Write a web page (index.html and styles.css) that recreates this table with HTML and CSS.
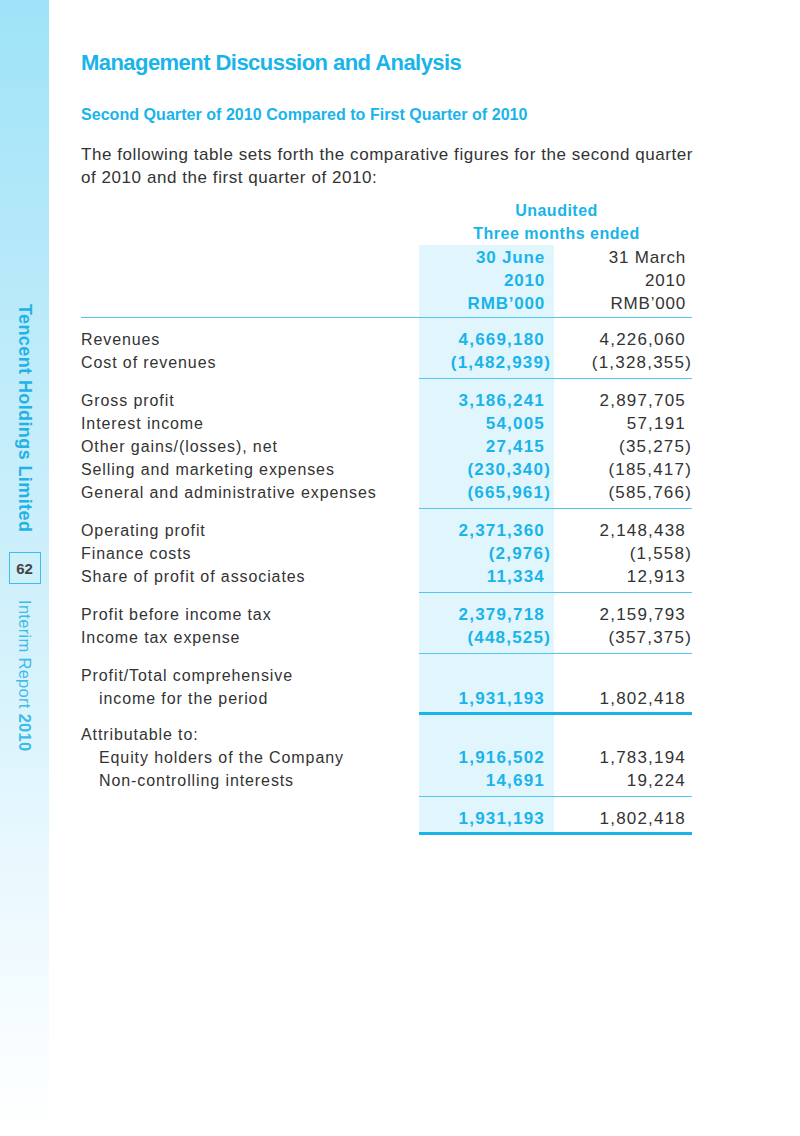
FILE: index.html
```html
<!DOCTYPE html>
<html lang="en">
<head>
<meta charset="utf-8">
<title>Management Discussion and Analysis</title>
<link rel="stylesheet" href="styles.css">
</head>
<body>
<div class="page">
  <aside class="side">
    <div class="side-company">Tencent Holdings Limited</div>
    <div class="side-page">62</div>
    <div class="side-report">Interim Report <b>2010</b></div>
  </aside>
  <main class="content">
    <h1 class="title">Management Discussion and Analysis</h1>
    <h2 class="subtitle">Second Quarter of 2010 Compared to First Quarter of 2010</h2>
    <p class="intro">The following table sets forth the comparative figures for the second quarter<br>of 2010 and the first quarter of 2010:</p>
    <table class="fin">
      <colgroup>
        <col class="c-label">
        <col class="c-cur">
        <col class="c-prev">
      </colgroup>
      <thead>
        <tr><th></th><th colspan="2" class="ghead">Unaudited</th></tr>
        <tr><th></th><th colspan="2" class="ghead">Three months ended</th></tr>
        <tr class="h-first"><th></th><th class="cur">30 June</th><th class="prev">31 March</th></tr>
        <tr><th></th><th class="cur">2010</th><th class="prev">2010</th></tr>
        <tr class="h-last"><th></th><th class="cur">RMB’000</th><th class="prev">RMB’000</th></tr>
      </thead>
      <tbody class="grp">
        <tr><td class="lbl">Revenues</td><td class="cur">4,669,180</td><td class="prev">4,226,060</td></tr>
        <tr><td class="lbl">Cost of revenues</td><td class="cur">(1,482,939<span class="rp">)</span></td><td class="prev">(1,328,355<span class="rp">)</span></td></tr>
      </tbody>
      <tbody class="grp">
        <tr><td class="lbl">Gross profit</td><td class="cur">3,186,241</td><td class="prev">2,897,705</td></tr>
        <tr><td class="lbl">Interest income</td><td class="cur">54,005</td><td class="prev">57,191</td></tr>
        <tr><td class="lbl">Other gains/(losses), net</td><td class="cur">27,415</td><td class="prev">(35,275<span class="rp">)</span></td></tr>
        <tr><td class="lbl">Selling and marketing expenses</td><td class="cur">(230,340<span class="rp">)</span></td><td class="prev">(185,417<span class="rp">)</span></td></tr>
        <tr><td class="lbl">General and administrative expenses</td><td class="cur">(665,961<span class="rp">)</span></td><td class="prev">(585,766<span class="rp">)</span></td></tr>
      </tbody>
      <tbody class="grp">
        <tr><td class="lbl">Operating profit</td><td class="cur">2,371,360</td><td class="prev">2,148,438</td></tr>
        <tr><td class="lbl">Finance costs</td><td class="cur">(2,976<span class="rp">)</span></td><td class="prev">(1,558<span class="rp">)</span></td></tr>
        <tr><td class="lbl">Share of profit of associates</td><td class="cur">11,334</td><td class="prev">12,913</td></tr>
      </tbody>
      <tbody class="grp">
        <tr><td class="lbl">Profit before income tax</td><td class="cur">2,379,718</td><td class="prev">2,159,793</td></tr>
        <tr><td class="lbl">Income tax expense</td><td class="cur">(448,525<span class="rp">)</span></td><td class="prev">(357,375<span class="rp">)</span></td></tr>
      </tbody>
      <tbody class="grp thick">
        <tr><td class="lbl">Profit/Total comprehensive</td><td class="cur"></td><td class="prev"></td></tr>
        <tr><td class="lbl indent">income for the period</td><td class="cur">1,931,193</td><td class="prev">1,802,418</td></tr>
      </tbody>
      <tbody class="grp">
        <tr><td class="lbl">Attributable to:</td><td class="cur"></td><td class="prev"></td></tr>
        <tr><td class="lbl indent">Equity holders of the Company</td><td class="cur">1,916,502</td><td class="prev">1,783,194</td></tr>
        <tr><td class="lbl indent">Non-controlling interests</td><td class="cur">14,691</td><td class="prev">19,224</td></tr>
      </tbody>
      <tbody class="grp thick">
        <tr><td class="lbl"></td><td class="cur">1,931,193</td><td class="prev">1,802,418</td></tr>
      </tbody>
    </table>
  </main>
</div>
</body>
</html>
```

FILE: styles.css
```css
* {
  box-sizing: border-box;
  margin: 0;
  padding: 0;
}

html, body {
  margin: 0;
  background: #ffffff;
}

body {
  font-family: "Liberation Sans", Arial, sans-serif;
  color: #333333;
}

.page {
  display: flex;
  min-height: 1136px;
}

/* ---------- sidebar ---------- */
.side {
  width: 49px;
  flex: none;
  background: linear-gradient(to bottom, #9fe3f8 0%, #bdebfa 30%, #d2f1fb 55%, #e8f8fe 75%, #f8fdff 92%, #ffffff 100%);
  display: flex;
  flex-direction: column;
  align-items: center;
  padding-top: 304px;
}

.side-company {
  writing-mode: vertical-rl;
  font-weight: bold;
  font-size: 18px;
  line-height: 20px;
  color: #22b2e6;
  letter-spacing: 0.4px;
}

.side-page {
  margin-top: 20px;
  width: 32px;
  height: 32px;
  border: 1px solid #3cbfea;
  display: flex;
  align-items: center;
  justify-content: center;
  font-weight: bold;
  font-size: 15px;
  color: #444444;
}

.side-report {
  writing-mode: vertical-rl;
  margin-top: 16px;
  font-size: 16.5px;
  line-height: 20px;
  letter-spacing: 0.3px;
  color: #3dbbea;
}

.side-report b {
  font-weight: bold;
}

/* ---------- content ---------- */
.content {
  padding: 50px 0 0 32px;
  width: 651px;
}

.title {
  font-size: 22px;
  line-height: 26px;
  font-weight: bold;
  color: #18b4ea;
  letter-spacing: -0.55px;
}

.subtitle {
  margin-top: 29px;
  font-size: 16px;
  line-height: 20px;
  font-weight: bold;
  color: #18b4ea;
  letter-spacing: 0.05px;
}

.intro {
  margin-top: 18px;
  font-size: 17px;
  line-height: 23px;
  letter-spacing: 0.56px;
  color: #333333;
}

/* ---------- table ---------- */
.fin {
  margin-top: 10px;
  width: 611px;
  border-collapse: collapse;
  font-size: 16px;
  line-height: 23px;
}

.c-label { width: 338px; }
.c-cur { width: 135px; }
.c-prev { width: 138px; }

.fin th, .fin td {
  padding: 0;
  font-weight: normal;
  vertical-align: middle;
  white-space: nowrap;
}

.ghead {
  text-align: center;
  font-weight: bold !important;
  color: #18b4ea;
  letter-spacing: 0.5px;
  padding-left: 2px !important;
}

.fin .cur,
.fin .prev {
  text-align: right;
  font-size: 17px;
  letter-spacing: 1.2px;
}

.fin .cur {
  background: #e1f5fd;
  color: #18b4ea;
  font-weight: bold;
  padding-right: 9px;
}

.fin .prev {
  color: #333333;
  padding-right: 6px;
}

.fin thead .cur,
.fin thead .prev {
  letter-spacing: 0.8px;
}

.h-first th {
  padding-top: 1px;
}

.h-last th {
  padding-bottom: 2px;
  border-bottom: 1.5px solid #4fc7ef;
}

.rp {
  margin-right: -6px;
}

.lbl {
  letter-spacing: 0.9px;
  color: #333333;
}

.lbl.indent {
  padding-left: 18px;
}

.grp tr:first-child td {
  padding-top: 10px;
}

.grp tr:last-child td {
  padding-bottom: 4px;
}

.grp tr:last-child td.cur,
.grp tr:last-child td.prev {
  border-bottom: 1.5px solid #4fc7ef;
}

.grp.thick tr:last-child td {
  padding-bottom: 2px;
}

.grp.thick tr:last-child td.cur,
.grp.thick tr:last-child td.prev {
  border-bottom: 3px solid #18b4ea;
}
```
